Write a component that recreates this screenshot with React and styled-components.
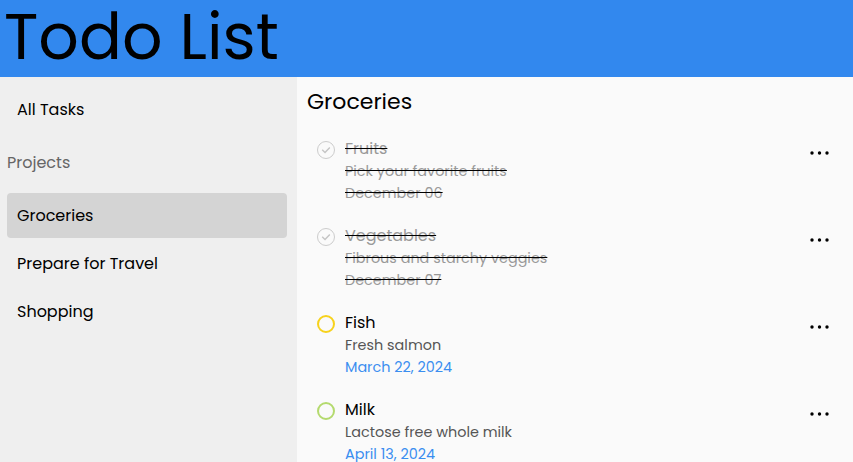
import React from 'react';
import styled, { createGlobalStyle } from 'styled-components';

const GlobalStyle = createGlobalStyle`
    html, body {
        margin: 0;
        padding: 0;
        height: 100%;
    }
    body {
        font-family: "Poppins", "Open Sans", sans-serif;
        overflow: hidden;
    }
    #root {
        height: 100%;
    }
`;

const Page = styled.div`
    display: flex;
    flex-direction: column;
    height: 100vh;
`;

const Header = styled.header`
    height: 77px;
    flex-shrink: 0;
    box-sizing: border-box;
    background-color: #3288ee;
    display: flex;
    align-items: center;
    padding: 0 0 3px 4px;
`;

const Title = styled.h1`
    margin: 0;
    font-size: 63.5px;
    font-weight: 400;
    color: black;
    line-height: 1;
`;

const Body = styled.div`
    display: flex;
    flex: 1;
`;

const Sidebar = styled.nav`
    width: 297px;
    background-color: #efefef;
    padding: 10px 10px 0 7px;
    box-sizing: border-box;
`;

const NavItem = styled.div`
    height: 45px;
    display: flex;
    align-items: center;
    padding-left: 10px;
    border-radius: 4px;
    font-size: 16px;
    color: black;
    margin-bottom: 3px;
    background-color: ${props => (props.active ? "#d4d4d4" : "transparent")};
`;

const SectionLabel = styled.div`
    font-size: 16px;
    color: #666;
    height: 40px;
    display: flex;
    align-items: center;
    margin: 10px 0 11px;
`;

const Main = styled.main`
    flex: 1;
    background-color: #fafafa;
    padding: 10px 12px 0 10px;
`;

const ProjectTitle = styled.h2`
    margin: 0 0 21px;
    font-size: 22px;
    font-weight: 400;
    line-height: 30px;
`;

const TaskRow = styled.div`
    display: flex;
    align-items: flex-start;
    padding-left: 10px;
    margin-bottom: 21px;
`;

const Check = styled.div`
    width: 18px;
    height: 18px;
    box-sizing: border-box;
    border-radius: 50%;
    border: ${props => (props.done ? "1.5px" : "2px")} solid ${props => props.color};
    margin-top: 3px;
    margin-right: 10px;
    display: flex;
    align-items: center;
    justify-content: center;
    flex-shrink: 0;
`;

const TaskInfo = styled.div`
    flex: 1;
    font-size: 16px;
    line-height: 22px;
    text-decoration: ${props => (props.done ? "line-through" : "none")};
`;

const TaskName = styled.div`
    color: ${props => (props.done ? "#999" : "black")};
`;

const TaskDesc = styled.div`
    font-size: 14.4px;
    color: ${props => (props.done ? "#999" : "#555")};
`;

const TaskDate = styled.div`
    font-size: 14.4px;
    color: ${props => (props.done ? "#999" : "#3a8ef0")};
`;

const MoreButton = styled.button`
    border: none;
    background: none;
    padding: 0;
    margin: 13px 12px 0 0;
    display: flex;
    cursor: pointer;
`;

const tasks = [
    { name: "Fruits", desc: "Pick your favorite fruits", date: "December 06", done: true, color: "#ccc" },
    { name: "Vegetables", desc: "Fibrous and starchy veggies", date: "December 07", done: true, color: "#ccc" },
    { name: "Fish", desc: "Fresh salmon", date: "March 22, 2024", done: false, color: "#f7d21c" },
    { name: "Milk", desc: "Lactose free whole milk", date: "April 13, 2024", done: false, color: "#b4da6e" },
];

const CheckMark = () => (
    <svg width="10" height="8" viewBox="0 0 10 8">
        <path d="M1.2 3.8 L4 6.4 L8.8 1.4" fill="none" stroke="#c4c4c4" strokeWidth="1.4" />
    </svg>
);

const Dots = () => (
    <svg width="19" height="4" viewBox="0 0 19 4">
        <circle cx="2" cy="2" r="1.7" fill="black" />
        <circle cx="9.5" cy="2" r="1.7" fill="black" />
        <circle cx="17" cy="2" r="1.7" fill="black" />
    </svg>
);

const App = () => {
    return (
        <Page>
            <GlobalStyle />
            <Header>
                <Title>Todo List</Title>
            </Header>
            <Body>
                <Sidebar>
                    <NavItem>All Tasks</NavItem>
                    <SectionLabel>Projects</SectionLabel>
                    <NavItem active>Groceries</NavItem>
                    <NavItem>Prepare for Travel</NavItem>
                    <NavItem>Shopping</NavItem>
                </Sidebar>
                <Main>
                    <ProjectTitle>Groceries</ProjectTitle>
                    {tasks.map(task => (
                        <TaskRow key={task.name}>
                            <Check color={task.color} done={task.done}>{task.done && <CheckMark />}</Check>
                            <TaskInfo done={task.done}>
                                <TaskName done={task.done}>{task.name}</TaskName>
                                <TaskDesc done={task.done}>{task.desc}</TaskDesc>
                                <TaskDate done={task.done}>{task.date}</TaskDate>
                            </TaskInfo>
                            <MoreButton><Dots /></MoreButton>
                        </TaskRow>
                    ))}
                </Main>
            </Body>
        </Page>
    );
};

export default App;
